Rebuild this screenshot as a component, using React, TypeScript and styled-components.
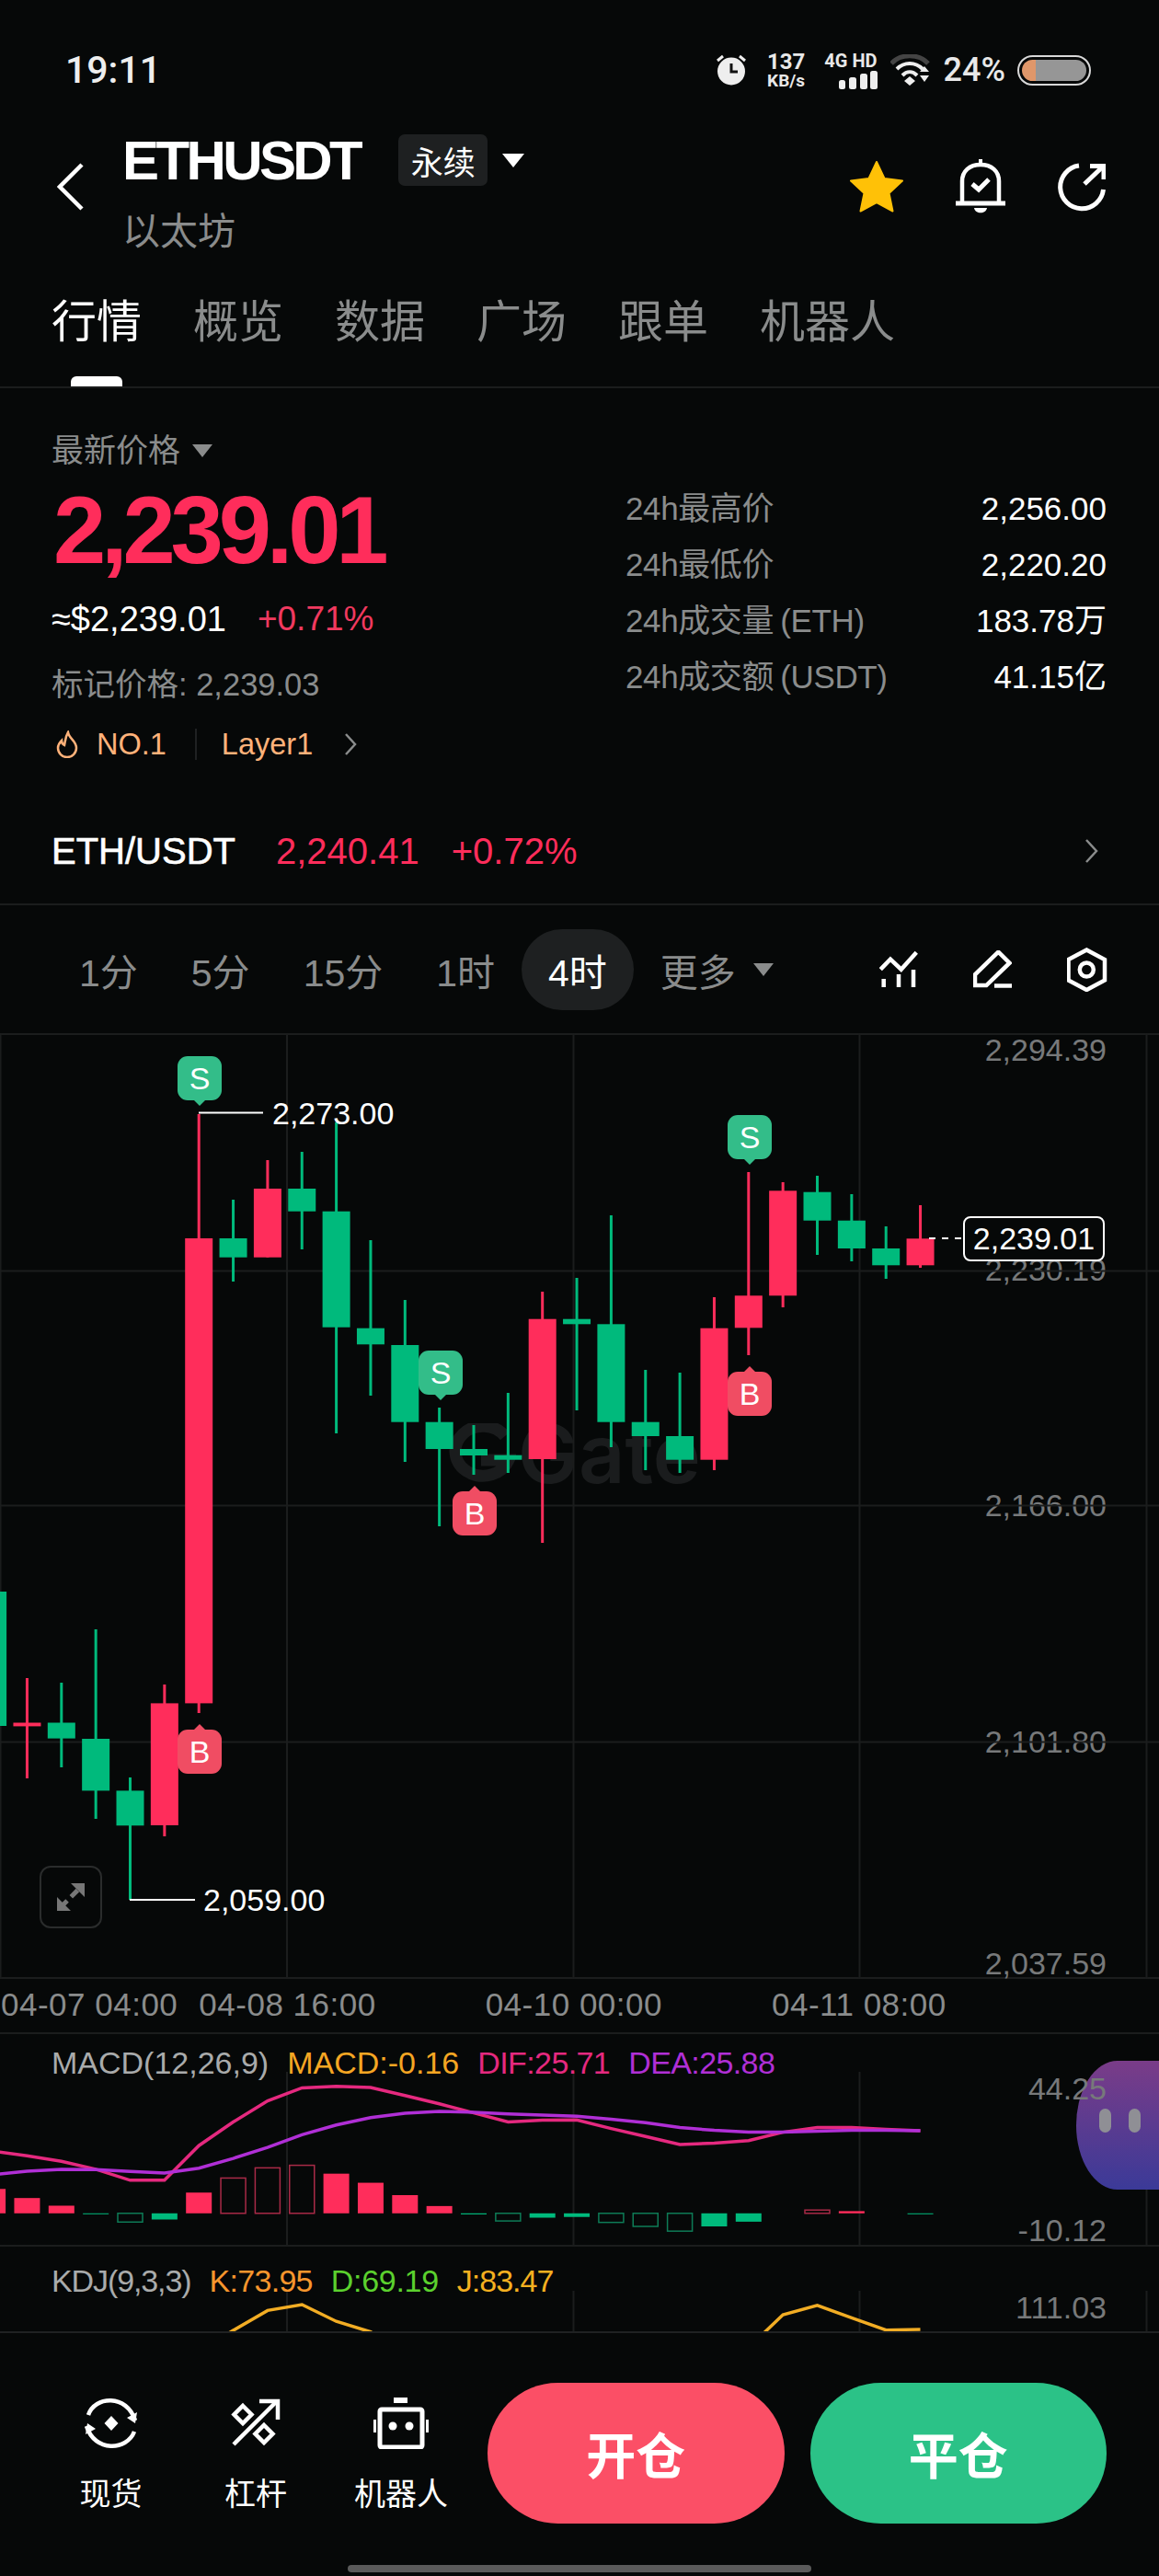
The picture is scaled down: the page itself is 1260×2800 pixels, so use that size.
import styled, { createGlobalStyle } from 'styled-components';

const RED = '#ff2d5b';
const GREEN = '#00ba7c';
const MUTED = '#8a8c8c';
const LINE = '#1b1d1d';
const BG = '#060808';

const GlobalStyle = createGlobalStyle`
	html, body {
		margin: 0;
		padding: 0;
		background: ${BG};
	}
	* {
		box-sizing: border-box;
	}
`;

const Page = styled.div`
	position: relative;
	width: 1260px;
	height: 2800px;
	overflow: hidden;
	display: flex;
	flex-direction: column;
	background: ${BG};
	color: #fff;
	font-family: 'Liberation Sans', 'Noto Sans CJK SC', sans-serif;
`;

/* status bar */
const StatusBar = styled.div`
	height: 146px;
	padding: 6px 74px 0 71px;
	display: flex;
	align-items: center;
	font-family: Roboto, sans-serif;
`;
const Clock = styled.div`
	font-size: 41px;
	font-weight: 500;
	color: #eee;
`;
const StatusRight = styled.div`
	margin-left: auto;
	display: flex;
	align-items: center;
	color: #e8e8e8;
`;
const Speed = styled.div`
	margin-left: 21px;
	width: 44px;
	display: flex;
	flex-direction: column;
	align-items: center;
	font-weight: 700;
`;
const SpeedValue = styled.span`
	font-size: 24px;
	line-height: 23px;
`;
const SpeedUnit = styled.span`
	font-size: 19px;
	line-height: 18px;
`;
const Net = styled.div`
	margin-left: 21px;
	width: 56px;
	display: flex;
	flex-direction: column;
	align-items: flex-end;
`;
const NetLabel = styled.span`
	font-size: 20px;
	line-height: 21px;
	font-weight: 700;
	white-space: nowrap;
`;
const WifiIcon = styled.svg`
	margin-left: 14px;
`;
const Percent = styled.span`
	margin-left: 14px;
	font-size: 36px;
	font-weight: 500;
`;
const Battery = styled.div`
	margin-left: 13px;
	width: 80px;
	height: 33px;
	padding: 3px;
	border: 2px solid #d8d8d8;
	border-radius: 17px;
`;
const BatteryInner = styled.div`
	height: 100%;
	border-radius: 12px;
	background: linear-gradient(to right, #e0976a 0 21%, #969696 21% 100%);
`;

/* header */
const Header = styled.div`
	display: flex;
	align-items: flex-start;
	padding: 0 58px 0 62px;
`;
const BackIcon = styled.svg`
	margin-top: 31px;
	flex: none;
`;
const TitleBlock = styled.div`
	margin-left: 42px;
`;
const TitleRow = styled.div`
	height: 56px;
	display: flex;
	align-items: center;
`;
const Symbol = styled.div`
	font-size: 60px;
	line-height: 56px;
	font-weight: 700;
	letter-spacing: -3.6px;
	margin-top: 1px;
`;
const ContractTag = styled.div`
	margin-left: 42px;
	width: 97px;
	height: 56px;
	background: #1e2021;
	border-radius: 7px;
	font-size: 35px;
	display: flex;
	align-items: center;
	justify-content: center;
`;
const Caret = styled.div<{ $size: number; $color: string; $gap: number }>`
	margin-left: ${p => p.$gap}px;
	width: 0;
	height: 0;
	border-left: ${p => p.$size}px solid transparent;
	border-right: ${p => p.$size}px solid transparent;
	border-top: ${p => p.$size * 1.3}px solid ${p => p.$color};
`;
const Subtitle = styled.div`
	margin-top: 27px;
	font-size: 41px;
	line-height: 46px;
	color: ${MUTED};
`;
const HeaderActions = styled.div`
	margin-left: auto;
	margin-top: 27px;
	display: flex;
	align-items: center;
	gap: 57px;
`;

/* tabs */
const Tabs = styled.div`
	height: 147px;
	padding: 45px 0 0 56px;
	display: flex;
	gap: 56px;
	border-bottom: 2px solid ${LINE};
`;
const Tab = styled.div<{ $active?: boolean }>`
	position: relative;
	font-size: 49px;
	line-height: 60px;
	height: 100px;
	color: ${p => (p.$active ? '#fff' : MUTED)};
	&::after {
		content: '';
		display: ${p => (p.$active ? 'block' : 'none')};
		position: absolute;
		left: 21px;
		width: 56px;
		bottom: 0;
		height: 11px;
		background: #fff;
		border-radius: 6px 6px 0 0;
	}
`;

/* price summary */
const Summary = styled.div`
	display: flex;
	padding: 48px 57px 0 56px;
`;
const SummaryLeft = styled.div`
	flex: 1;
`;
const PriceLabel = styled.div`
	display: flex;
	align-items: center;
	font-size: 35px;
	line-height: 40px;
	color: ${MUTED};
`;
const BigPrice = styled.div`
	margin: 17px 0 0 2px;
	font-size: 103px;
	line-height: 100px;
	font-weight: 700;
	color: ${RED};
	letter-spacing: -5.2px;
`;
const FiatRow = styled.div`
	margin-top: 24px;
	display: flex;
	gap: 34px;
	font-size: 38px;
	line-height: 44px;
`;
const Change = styled.span`
	color: #f0395f;
	font-size: 37px;
`;
const MarkPrice = styled.div`
	margin-top: 27px;
	font-size: 34.5px;
	line-height: 44px;
	color: ${MUTED};
`;
const TagRow = styled.div`
	margin-top: 21px;
	height: 44px;
	display: flex;
	align-items: center;
	padding-left: 5px;
	font-size: 32.5px;
	color: #ffb27a;
`;
const TagRank = styled.span`
	margin-left: 20px;
`;
const TagDivider = styled.div`
	margin: 0 27px 0 31px;
	width: 2px;
	height: 34px;
	background: #1f2122;
`;
const ChevronIcon = styled.svg<{ $gap: number }>`
	margin-left: ${p => p.$gap}px;
	flex: none;
`;
const Stats = styled.div`
	width: 523px;
	margin-top: 52px;
	font-size: 35px;
`;
const StatRow = styled.div`
	height: 61px;
	line-height: 61px;
	display: flex;
	justify-content: space-between;
`;
const StatLabel = styled.span`
	color: ${MUTED};
	letter-spacing: -0.4px;
	word-spacing: -2px;
`;

/* spot row */
const SpotRow = styled.div`
	margin-top: 69px;
	padding: 0 66px 32px 56px;
	height: 84px;
	display: flex;
	align-items: center;
	font-size: 40px;
	line-height: 50px;
	border-bottom: 2px solid ${LINE};
`;
const SpotName = styled.span`
	-webkit-text-stroke: 0.6px #fff;
`;
const SpotValue = styled.span<{ $gap: number }>`
	margin-left: ${p => p.$gap}px;
	color: ${RED};
`;
const SpotChevron = styled.svg`
	margin-left: auto;
`;

/* intervals */
const IntervalBar = styled.div`
	height: 139px;
	padding: 0 56px 0 57px;
	display: flex;
	align-items: center;
`;
const Interval = styled.div<{ $active?: boolean }>`
	height: 88px;
	padding: 0 29px;
	display: flex;
	align-items: center;
	font-size: 41px;
	border-radius: 44px;
	color: ${p => (p.$active ? '#fff' : MUTED)};
	background: ${p => (p.$active ? '#1e2021' : 'transparent')};
`;
const ChartTools = styled.div`
	margin-left: auto;
	display: flex;
	align-items: center;
	gap: 60px;
`;

/* main chart */
const ChartPane = styled.div`
	position: relative;
	height: 1028px;
	border-bottom: 2px solid ${LINE};
`;
const CanvasSvg = styled.svg`
	position: absolute;
	left: 0;
	top: 0;
	display: block;
`;
const Watermark = styled.div`
	position: absolute;
	left: 483px;
	top: 413px;
	display: flex;
	align-items: center;
	gap: 2px;
	font-family: Inter, sans-serif;
	font-size: 88px;
	line-height: 88px;
	font-weight: 600;
	color: #1a1c1d;
`;
const AxisPrice = styled.div<{ $y: number }>`
	position: absolute;
	right: 57px;
	top: ${p => p.$y - 20}px;
	font-size: 34px;
	line-height: 40px;
	color: #77797a;
`;
const ExtremeLabel = styled.div<{ $x: number; $y: number }>`
	position: absolute;
	left: ${p => p.$x}px;
	top: ${p => p.$y - 20}px;
	font-size: 34px;
	line-height: 40px;
	color: #fff;
`;
const LastPrice = styled.div`
	position: absolute;
	left: 1047px;
	top: 199px;
	width: 154px;
	height: 49px;
	display: flex;
	align-items: center;
	justify-content: center;
	background: ${BG};
	border: 2px solid #fff;
	border-radius: 8px;
	font-size: 34px;
`;
const TradeMarker = styled.div<{ $x: number; $y: number; $side: 'S' | 'B' }>`
	position: absolute;
	left: ${p => p.$x}px;
	top: ${p => p.$y}px;
	width: 48px;
	height: 48px;
	display: flex;
	align-items: center;
	justify-content: center;
	border-radius: 11px;
	font-size: 34px;
	color: #fff;
	background: ${p => (p.$side === 'S' ? '#33bd89' : '#f04d63')};
	&::after {
		content: '';
		position: absolute;
		left: 18px;
		${p =>
			p.$side === 'S'
				? 'top: 100%; border-top: 6px solid #33bd89;'
				: 'bottom: 100%; border-bottom: 6px solid #f04d63;'}
		border-left: 6px solid transparent;
		border-right: 6px solid transparent;
	}
`;
const ExpandButton = styled.div`
	position: absolute;
	left: 43px;
	top: 905px;
	width: 68px;
	height: 68px;
	border: 2px solid #2a2c2c;
	border-radius: 12px;
	display: flex;
	align-items: center;
	justify-content: center;
`;

/* time axis */
const TimeAxis = styled.div`
	height: 60px;
	padding: 0 0 2px 1px;
	display: flex;
	align-items: center;
	font-size: 35px;
	letter-spacing: 0.5px;
	color: ${MUTED};
	border-bottom: 2px solid ${LINE};
`;
const TimeLabel = styled.span<{ $gap: number }>`
	margin-left: ${p => p.$gap}px;
	white-space: nowrap;
`;

/* indicators */
const IndicatorPane = styled.div<{ $height: number; $divider?: boolean }>`
	position: relative;
	height: ${p => p.$height}px;
	overflow: hidden;
	border-bottom: ${p => (p.$divider ? `2px solid ${LINE}` : 'none')};
`;
const Legend = styled.div<{ $top: number }>`
	position: relative;
	padding: ${p => p.$top}px 0 0 56px;
	display: flex;
	gap: 20px;
	font-size: 34px;
	line-height: 40px;
`;
const LegendItem = styled.span<{ $color: string; $tight?: number }>`
	color: ${p => p.$color};
	letter-spacing: ${p => p.$tight ?? 0}px;
`;
const IndicatorAxis = styled.div<{ $y: number }>`
	position: absolute;
	z-index: 2;
	right: 57px;
	top: ${p => p.$y - 17}px;
	font-size: 34px;
	line-height: 34px;
	color: #77797a;
`;

/* floating assistant */
const FloatBubble = styled.div`
	position: absolute;
	z-index: 1;
	left: 1170px;
	top: 2240px;
	width: 90px;
	height: 140px;
	border-radius: 50% 0 0 50% / 50% 0 0 50%;
	background: linear-gradient(to bottom, #7a3c88, #3b3a98);
	display: flex;
	align-items: center;
	gap: 19px;
	padding: 0 0 10px 25px;
`;
const FloatEye = styled.div`
	width: 13px;
	height: 26px;
	border-radius: 7px;
	background: #8f8f95;
`;

/* bottom bar */
const BottomBar = styled.div`
	flex: 1;
	position: relative;
	display: flex;
	padding: 54px 57px 0 0;
	border-top: 2px solid #1f2122;
`;
const QuickLink = styled.div<{ $width: number }>`
	width: ${p => p.$width}px;
	display: flex;
	flex-direction: column;
	align-items: center;
	font-size: 34px;
`;
const QuickIcon = styled.div`
	height: 67px;
	margin: 10px 0 17px;
	display: flex;
	align-items: center;
`;
const QuickLinks = styled.div`
	display: flex;
	margin-left: 43px;
`;
const ActionButton = styled.div<{ $bg: string; $gap: number }>`
	margin-left: ${p => p.$gap}px;
	width: 323px;
	height: 153px;
	border-radius: 77px;
	background: ${p => p.$bg};
	display: flex;
	align-items: center;
	justify-content: center;
	font-size: 54px;
	font-weight: 700;
`;
const HomeIndicator = styled.div`
	position: absolute;
	left: 378px;
	bottom: 4px;
	width: 504px;
	height: 8px;
	border-radius: 4px;
	background: #5a5a5a;
`;

const candleX = (i: number) => 216.2 + 37.35 * i;
const macdY = (z: number) => 2180 + z / 2.529;

type Candle = [number, number, number, number, 'r' | 'g'];

// high, body top, body bottom, low
const candles: Candle[] = [
	[1730, 1730, 1876, 1876, 'g'],
	[1824, 1872.5, 1876.4, 1933, 'r'],
	[1829, 1872.5, 1889.6, 1921, 'g'],
	[1771, 1890, 1946.4, 1977, 'g'],
	[1932, 1946.4, 1984.3, 2065, 'g'],
	[1831, 1851.4, 1984, 1996, 'r'],
	[1211, 1346, 1851.4, 1862, 'r'],
	[1304, 1346, 1366.7, 1393, 'g'],
	[1261, 1292, 1366.7, 1366.7, 'r'],
	[1252, 1292, 1316.7, 1358, 'g'],
	[1220, 1316.7, 1442.7, 1558, 'g'],
	[1348, 1443.7, 1461.3, 1517, 'g'],
	[1413, 1462, 1545.7, 1589, 'g'],
	[1530, 1545.7, 1575, 1659, 'g'],
	[1549, 1575, 1582, 1603, 'g'],
	[1514, 1581.7, 1586.7, 1601, 'g'],
	[1404, 1433.7, 1586, 1677, 'r'],
	[1389, 1433.7, 1439.3, 1533, 'g'],
	[1321, 1439.3, 1545.7, 1573, 'g'],
	[1489, 1545.7, 1561, 1598, 'g'],
	[1492, 1561, 1586.7, 1601, 'g'],
	[1410, 1443.7, 1586.7, 1598, 'r'],
	[1274, 1408.3, 1443.3, 1473, 'r'],
	[1285, 1294.3, 1408.3, 1421, 'r'],
	[1278, 1295.7, 1326.7, 1364, 'g'],
	[1298, 1326.7, 1357, 1371, 'g'],
	[1333, 1357, 1375.3, 1390, 'g'],
	[1310, 1346.3, 1375.3, 1378, 'r'],
];

const dif = [
	400, 413, 428, 450, 480, 480, 385, 320, 262, 226, 222, 225, 247, 270, 295, 320, 315, 314, 338,
	360, 382, 378, 371, 348, 335, 335, 340, 344,
];
const dea = [
	465, 455, 450, 451, 456, 460, 447, 420, 390, 355, 328, 308, 296, 291, 293, 298, 301, 304, 312,
	322, 335, 343, 348, 348, 345, 343, 343, 344,
];

// value, hollow
const histogram: [number, boolean][] = [
	[504, false],
	[529, false],
	[550, false],
	[572, false],
	[595, true],
	[588, false],
	[514, false],
	[474, true],
	[446, true],
	[439, true],
	[462, false],
	[487, false],
	[521, false],
	[551, false],
	[574, false],
	[592, true],
	[583, false],
	[581, false],
	[596, true],
	[607, true],
	[620, true],
	[607, false],
	[594, false],
	[571, false],
	[562, true],
	[565, false],
	[571, false],
	[572, false],
];

const kdj = [
	950, 950, 950, 950, 950, 950, 950, 893, 838, 822, 868, 897, 950, 950, 950, 950, 950, 950, 950,
	950, 950, 950, 940, 850, 824, 858, 892, 890,
];

const toPoints = (values: number[]) =>
	values.map((v, i) => `${candleX(i - 6).toFixed(1)},${macdY(v).toFixed(1)}`).join(' ');

const gridX = [0, 311.5, 623, 934, 1246];

function MainChart() {
	return (
		<CanvasSvg width="1260" height="1028" viewBox="0 1123 1260 1028">
			{[1124, 1381.5, 1636.5, 1893.5].map(y => (
				<line key={y} x1="0" x2="1260" y1={y} y2={y} stroke={LINE} strokeWidth="2" />
			))}
			{gridX.map(x => (
				<line key={x} x1={x + 0.5} x2={x + 0.5} y1="1123" y2="2151" stroke={LINE} strokeWidth="2" />
			))}
			{candles.map(([high, top, bottom, low, side], i) => {
				const x = candleX(i - 6);
				const color = side === 'r' ? RED : GREEN;
				return (
					<g key={i} fill={color}>
						<rect x={x - 1.5} y={high} width="3" height={low - high} />
						<rect x={x - 15} y={top} width="30" height={bottom - top} />
					</g>
				);
			})}
			<path d="M216 1209.5H286M141 2065H212" stroke="#fff" strokeWidth="2" fill="none" />
			<path d="M1010 1346H1047" stroke="#fff" strokeWidth="2" strokeDasharray="7 7" fill="none" />
		</CanvasSvg>
	);
}

function MacdChart() {
	return (
		<CanvasSvg width="1260" height="231" viewBox="0 2211 1260 231">
			{gridX.slice(1).map(x => (
				<line key={x} x1={x + 0.5} x2={x + 0.5} y1="2252" y2="2441" stroke={LINE} strokeWidth="2" />
			))}
			{histogram.map(([value, hollow], i) => {
				if (value === 571) return null;
				const x = candleX(i - 6) - 14;
				const base = macdY(571);
				const y = macdY(value);
				const up = i < 3 || (i >= 6 && i < 14) || (i >= 23 && i < 26);
				const color = up ? RED : GREEN;
				const top = Math.min(y, base);
				const h = Math.max(Math.abs(y - base), 1);
				if (hollow) {
					return (
						<rect
							key={i}
							x={x + 0.5}
							y={top}
							width="27"
							height={h}
							fill="none"
							stroke={up ? '#a82a47' : '#0e7c57'}
							strokeWidth="1.5"
						/>
					);
				}
				return <rect key={i} x={x} y={top} width="28" height={h} fill={color} />;
			})}
			<polyline points={toPoints(dif)} fill="none" stroke="#e5297f" strokeWidth="3.5" />
			<polyline points={toPoints(dea)} fill="none" stroke="#b02fd6" strokeWidth="3.5" />
		</CanvasSvg>
	);
}

function KdjChart() {
	return (
		<CanvasSvg width="1260" height="92" viewBox="0 2442 1260 92">
			{gridX.slice(1).map(x => (
				<line key={x} x1={x + 0.5} x2={x + 0.5} y1="2490" y2="2535" stroke={LINE} strokeWidth="2" />
			))}
			<polyline points={toPoints(kdj)} fill="none" stroke="#f2ad24" strokeWidth="3.5" />
		</CanvasSvg>
	);
}

export default function App() {
	return (
		<Page>
			<GlobalStyle />
			<StatusBar>
				<Clock>19:11</Clock>
				<StatusRight>
					<svg width="34" height="34" viewBox="0 0 34 34">
						<circle cx="17" cy="18.5" r="15" fill="#eee" />
						<path d="M17 10v9h7" stroke="#111" strokeWidth="3" fill="none" />
						<path d="M2 7l6-5M32 7l-6-5" stroke="#eee" strokeWidth="3" />
					</svg>
					<Speed>
						<SpeedValue>137</SpeedValue>
						<SpeedUnit>KB/s</SpeedUnit>
					</Speed>
					<Net>
						<NetLabel>4G HD</NetLabel>
						<svg width="42" height="20" viewBox="0 0 42 20" fill="#eee">
							<rect x="0" y="10" width="7" height="10" rx="2.5" />
							<rect x="11" y="7" width="8" height="13" rx="2.5" />
							<rect x="23" y="3" width="8" height="17" rx="2.5" />
							<rect x="34" y="0" width="8" height="20" rx="2.5" />
						</svg>
					</Net>
					<WifiIcon width="44" height="34" viewBox="0 0 44 34">
						<path d="M1 10C11 -1 31 -1 41 10" stroke="#444" strokeWidth="5" fill="none" />
						<path d="M7 16C15 8 27 8 35 16M13 23C18 18 24 18 29 23" stroke="#eee" strokeWidth="4" fill="none" />
						<path d="M15 29l6-5 6 5-6 5zM32 19l5-6 5 6zM32 23h10l-5 7z" fill="#eee" />
					</WifiIcon>
					<Percent>24%</Percent>
					<Battery>
						<BatteryInner />
					</Battery>
				</StatusRight>
			</StatusBar>

			<Header>
				<BackIcon width="29" height="52" viewBox="0 0 29 52">
					<path d="M27 2L3 26l24 24" stroke="#fff" strokeWidth="4.5" fill="none" />
				</BackIcon>
				<TitleBlock>
					<TitleRow>
						<Symbol>ETHUSDT</Symbol>
						<ContractTag>永续</ContractTag>
						<Caret $size={12} $color="#fff" $gap={16} />
					</TitleRow>
					<Subtitle>以太坊</Subtitle>
				</TitleBlock>
				<HeaderActions>
					<svg width="58" height="56" viewBox="0 0 58 56">
						<path
							d="M29 1l8.5 18 19.5 2.500-14.500 13.500 4 19.500-17.500-9.500-17.500 9.500 4-19.500-14.500-13.500 19.500-2.500z"
							fill="#ffc107"
							stroke="#ffc107"
							strokeWidth="2"
							strokeLinejoin="round"
						/>
					</svg>
					<svg width="54" height="60" viewBox="0 0 54 60" fill="none" stroke="#fff">
						<path d="M7 47V24C7 13 15 6 27 6s20 7 20 18v23" strokeWidth="4.500" />
						<path d="M0 48h54" strokeWidth="5" />
						<path d="M27 0v6" strokeWidth="4" />
						<path d="M20 53h14c-1 7-13 7-14 0z" fill="#fff" stroke="none" />
						<path d="M18 27l7 6 11-11" strokeWidth="5" />
					</svg>
					<svg width="52" height="53" viewBox="0 0 52 53" fill="none" stroke="#fff" strokeWidth="5">
						<path d="M23 3A23.500 23.500 0 1 0 49.500 29" />
						<path d="M29 23L49 4" />
						<path d="M35 3.500h15V18" />
					</svg>
				</HeaderActions>
			</Header>

			<Tabs>
				<Tab $active>行情</Tab>
				<Tab>概览</Tab>
				<Tab>数据</Tab>
				<Tab>广场</Tab>
				<Tab>跟单</Tab>
				<Tab>机器人</Tab>
			</Tabs>

			<Summary>
				<SummaryLeft>
					<PriceLabel>
						最新价格
						<Caret $size={11} $color="#8a8c8c" $gap={13} />
					</PriceLabel>
					<BigPrice>2,239.01</BigPrice>
					<FiatRow>
						<span>≈$2,239.01</span>
						<Change>+0.71%</Change>
					</FiatRow>
					<MarkPrice>标记价格: 2,239.03</MarkPrice>
					<TagRow>
						<svg width="24" height="30" viewBox="0 0 24 30" fill="none" stroke="#ffb27a" strokeWidth="2.500">
							<path d="M13 2c1 7 9 9 9 17a10 10 0 0 1-20 0c0-4 2-6 4-8 0 3 1 4 3 5 1-5 1-9 4-14z" />
						</svg>
						<TagRank>NO.1</TagRank>
						<TagDivider />
						<span>Layer1</span>
						<ChevronIcon $gap={34} width="14" height="24" viewBox="0 0 14 24">
							<path d="M2 1l10 11-10 11" stroke="#8a8c8c" strokeWidth="2.500" fill="none" />
						</ChevronIcon>
					</TagRow>
				</SummaryLeft>
				<Stats>
					<StatRow>
						<StatLabel>24h最高价</StatLabel>
						<span>2,256.00</span>
					</StatRow>
					<StatRow>
						<StatLabel>24h最低价</StatLabel>
						<span>2,220.20</span>
					</StatRow>
					<StatRow>
						<StatLabel>24h成交量 (ETH)</StatLabel>
						<span>183.78万</span>
					</StatRow>
					<StatRow>
						<StatLabel>24h成交额 (USDT)</StatLabel>
						<span>41.15亿</span>
					</StatRow>
				</Stats>
			</Summary>

			<SpotRow>
				<SpotName>ETH/USDT</SpotName>
				<SpotValue $gap={44}>2,240.41</SpotValue>
				<SpotValue $gap={35}>+0.72%</SpotValue>
				<SpotChevron width="15" height="26" viewBox="0 0 15 26">
					<path d="M2 1l11 12-11 12" stroke="#8a8c8c" strokeWidth="2.500" fill="none" />
				</SpotChevron>
			</SpotRow>

			<IntervalBar>
				<Interval>1分</Interval>
				<Interval>5分</Interval>
				<Interval>15分</Interval>
				<Interval>1时</Interval>
				<Interval $active>4时</Interval>
				<Interval>
					更多
					<Caret $size={11} $color="#8a8c8c" $gap={19} />
				</Interval>
				<ChartTools>
					<svg width="42" height="42" viewBox="958 1032 42 42" fill="none" stroke="#fff" strokeWidth="4.500">
						<path d="M959.300 1052.700L970 1041.700L981.700 1052.700L998.300 1034.300" />
						<path d="M962.700 1063V1072M979 1058V1072M995 1053V1072" />
					</svg>
					<svg width="42" height="42" viewBox="1060 1032 42 42" fill="none" stroke="#fff" strokeWidth="4.500">
						<path d="M1087.300 1033.700L1099.500 1045.700L1074.300 1070H1062V1058.300z" />
						<path d="M1083 1070.500H1102" />
					</svg>
					<svg width="44" height="48" viewBox="1162 1030 44 48" fill="none" stroke="#fff" strokeWidth="4.500">
						<path d="M1183.300 1032.500L1203 1043V1065.500L1183.300 1076L1163.500 1065.500V1043z" />
						<circle cx="1183.300" cy="1054" r="7.500" />
					</svg>
				</ChartTools>
			</IntervalBar>

			<ChartPane>
				<Watermark>
					<svg width="78" height="66" viewBox="0 0 78 66" fill="none" stroke="#1a1c1d" strokeWidth="13">
						<path d="M66 14A30 27 0 1 0 70 40H40" />
					</svg>
					Gate
				</Watermark>
				<AxisPrice $y={18}>2,294.39</AxisPrice>
				<AxisPrice $y={257}>2,230.19</AxisPrice>
				<AxisPrice $y={513}>2,166.00</AxisPrice>
				<AxisPrice $y={770}>2,101.80</AxisPrice>
				<AxisPrice $y={1011}>2,037.59</AxisPrice>
				<MainChart />
				<ExtremeLabel $x={296} $y={87}>2,273.00</ExtremeLabel>
				<ExtremeLabel $x={221} $y={942}>2,059.00</ExtremeLabel>
				<LastPrice>2,239.01</LastPrice>
				<TradeMarker $x={193} $y={25} $side="S">S</TradeMarker>
				<TradeMarker $x={455} $y={345} $side="S">S</TradeMarker>
				<TradeMarker $x={791} $y={89} $side="S">S</TradeMarker>
				<TradeMarker $x={193} $y={757} $side="B">B</TradeMarker>
				<TradeMarker $x={492} $y={498} $side="B">B</TradeMarker>
				<TradeMarker $x={791} $y={368} $side="B">B</TradeMarker>
				<ExpandButton>
					<svg width="34" height="34" viewBox="0 0 34 34" fill="none" stroke="#777" strokeWidth="5">
						<path d="M6 28L28 6" strokeDasharray="10 6" />
						<path d="M17 2h15v15zM2 17v15h15z" fill="#777" stroke="none" />
					</svg>
				</ExpandButton>
			</ChartPane>

			<TimeAxis>
				<TimeLabel $gap={0}>04-07 04:00</TimeLabel>
				<TimeLabel $gap={23}>04-08 16:00</TimeLabel>
				<TimeLabel $gap={119}>04-10 00:00</TimeLabel>
				<TimeLabel $gap={119}>04-11 08:00</TimeLabel>
			</TimeAxis>

			<IndicatorPane $height={231} $divider>
				<MacdChart />
				<Legend $top={11}>
					<LegendItem $color="#a9abab">MACD(12,26,9)</LegendItem>
					<LegendItem $color="#f5a623">MACD:-0.16</LegendItem>
					<LegendItem $color="#e5297f" $tight={-0.6}>DIF:25.71</LegendItem>
					<LegendItem $color="#b02fd6" $tight={-0.6}>DEA:25.88</LegendItem>
				</Legend>
				<IndicatorAxis $y={59}>44.25</IndicatorAxis>
				<IndicatorAxis $y={213}>-10.12</IndicatorAxis>
			</IndicatorPane>

			<IndicatorPane $height={92}>
				<KdjChart />
				<Legend $top={17}>
					<LegendItem $color="#a9abab" $tight={-1.1}>KDJ(9,3,3)</LegendItem>
					<LegendItem $color="#f7962d" $tight={-0.7}>K:73.95</LegendItem>
					<LegendItem $color="#5bd12e" $tight={-0.3}>D:69.19</LegendItem>
					<LegendItem $color="#f5b020" $tight={-1}>J:83.47</LegendItem>
				</Legend>
				<IndicatorAxis $y={66}>111.03</IndicatorAxis>
			</IndicatorPane>

			<BottomBar>
				<QuickLinks>
					<QuickLink $width={155}>
						<QuickIcon>
							<svg width="60" height="60" viewBox="0 0 60 60" fill="none" stroke="#fff" strokeWidth="4.500">
								<path d="M5 21C12 0 47 -2 56 27" />
								<path d="M55 39C47 60 12 62 3 33" />
								<path d="M47 24l9 6 2-12zM13 36l-9-6-2 12z" fill="#fff" stroke="none" />
								<path d="M30 22l7.500 8-7.500 8-7.500-8z" fill="#fff" stroke="none" />
							</svg>
						</QuickIcon>
						现货
					</QuickLink>
					<QuickLink $width={160}>
						<QuickIcon>
							<svg width="54" height="54" viewBox="0 0 54 54" fill="none" stroke="#fff" strokeWidth="4.500">
								<path d="M3 50L50 3" />
								<path d="M31 3H51V23" />
								<path d="M13 8l9.500 9.500L13 27 3.500 17.500z" />
								<path d="M36 29l9.500 9.500L36 48l-9.500-9.500z" />
							</svg>
						</QuickIcon>
						杠杆
					</QuickLink>
					<QuickLink $width={156}>
						<QuickIcon>
							<svg width="60" height="56" viewBox="0 0 60 56" fill="#fff">
								<rect x="22" y="0" width="15" height="6" />
								<rect x="7" y="13" width="46" height="41" rx="2" fill="none" stroke="#fff" strokeWidth="5" />
								<rect x="0" y="24" width="3" height="14" />
								<rect x="57" y="24" width="3" height="14" />
								<circle cx="21" cy="31" r="4.500" />
								<circle cx="39" cy="31" r="4.500" />
							</svg>
						</QuickIcon>
						机器人
					</QuickLink>
				</QuickLinks>
				<ActionButton $bg="#fb4f66" $gap={16}>开仓</ActionButton>
				<ActionButton $bg="#2bc287" $gap={28}>平仓</ActionButton>
				<HomeIndicator />
			</BottomBar>

			<FloatBubble>
				<FloatEye />
				<FloatEye />
			</FloatBubble>
		</Page>
	);
}
